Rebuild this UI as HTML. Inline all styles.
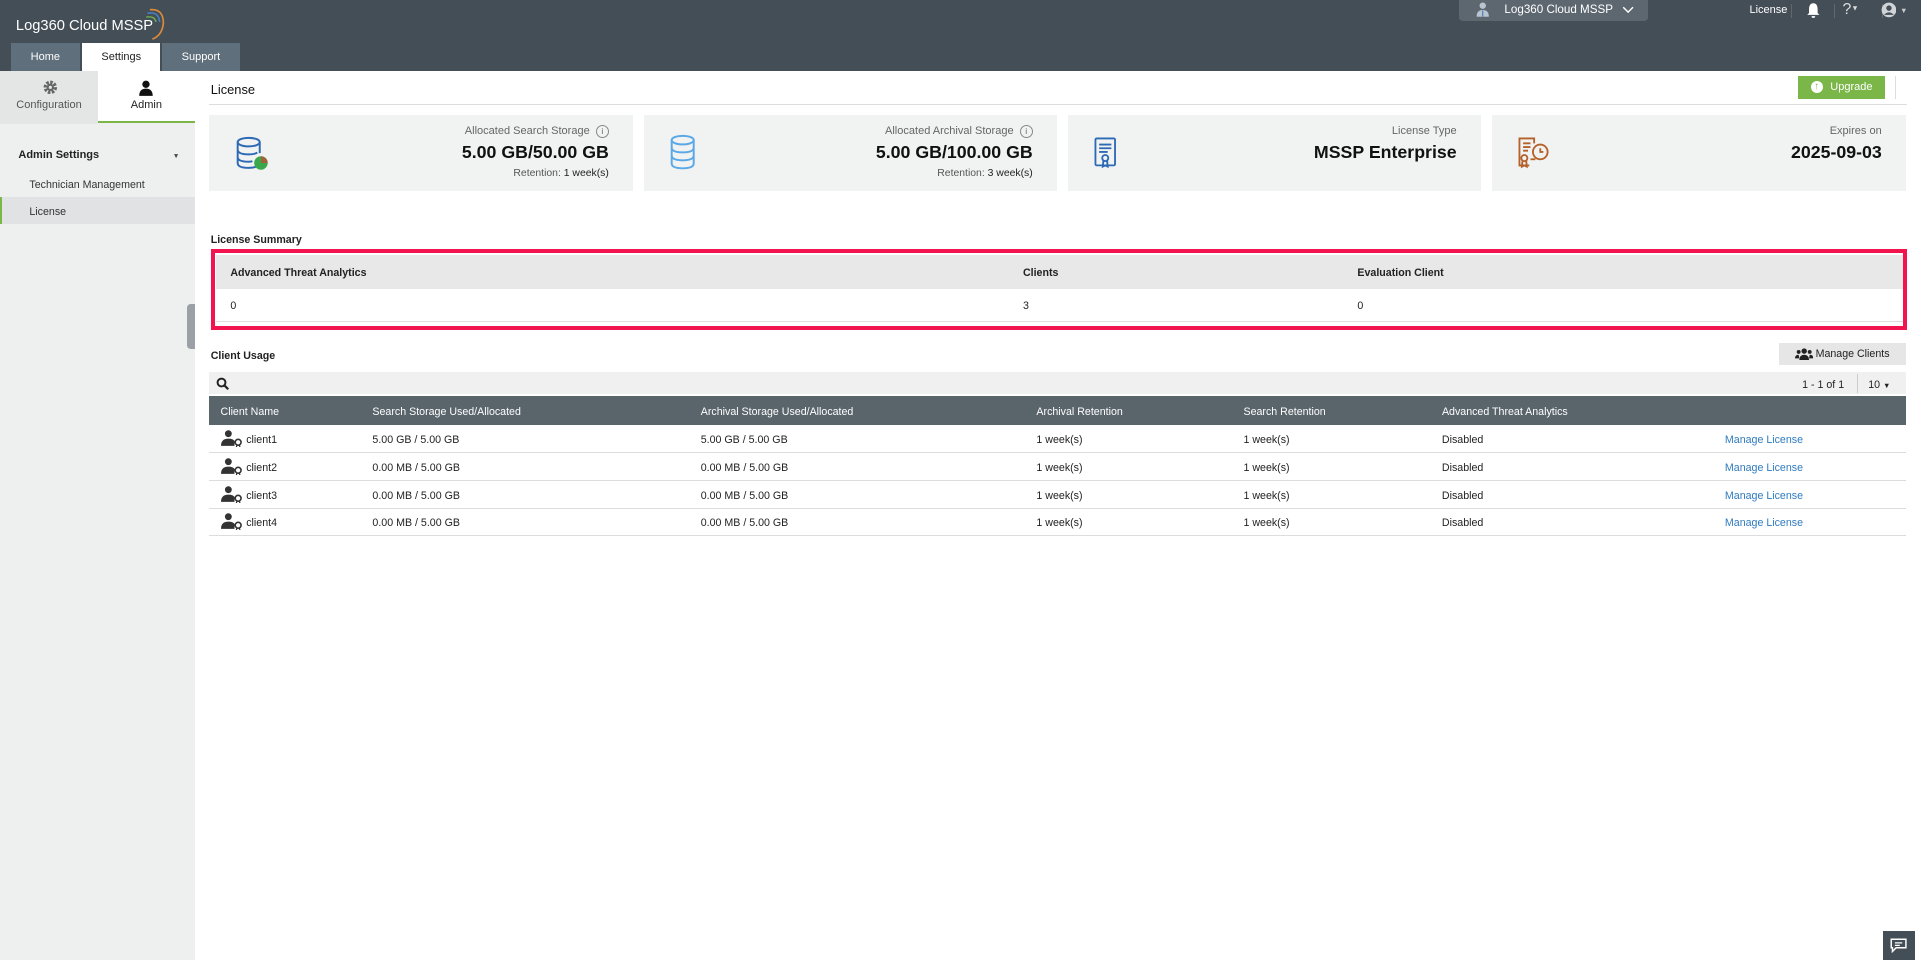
<!DOCTYPE html>
<html><head><meta charset="utf-8"><style>
html,body{margin:0;padding:0;width:1921px;height:960px;overflow:hidden;background:#fff}
#w{position:relative;width:1568px;height:784px;zoom:1.2251;font-family:"Liberation Sans",sans-serif;font-size:9px;color:#222}
.a{position:absolute}
.card{position:absolute;top:94px;height:62px;background:#f1f2f2}
.card .l{position:absolute;right:20px;top:8px;color:#666;font-size:9px}
.card .v{position:absolute;right:20px;top:22px;font-size:14.5px;font-weight:bold;color:#111}
.card .r{position:absolute;right:20px;top:43px;font-size:8.5px;color:#555}
.th{color:#fff;font-size:8.7px}
.row{position:absolute;left:171px;width:1385px;height:22px;border-bottom:1px solid #ddd}
.row span{position:absolute;top:7px;font-size:8.7px}
.row svg{position:absolute;left:9px;top:4px}
.ml{color:#2f7bbf}
</style></head><body><div id="w">
<!-- header -->
<div class="a" style="left:0;top:0;width:1568px;height:58px;background:#444e56"></div>
<div class="a" style="left:13px;top:15px;color:#fff;font-size:12px;">Log360 Cloud MSSP</div>
<svg class="a" style="left:118px;top:5px" width="20" height="30" viewBox="0 0 20 30"><path d="M4 3 Q15 2 15 14 Q14 24 6 27" fill="none" stroke="#d98a3a" stroke-width="1.4"/><path d="M2 6 Q11 4 12 13" fill="none" stroke="#4a7fc1" stroke-width="1.3"/><path d="M1 9 Q8 8 9 13" fill="none" stroke="#6cae4b" stroke-width="1.2"/></svg>
<div class="a" style="left:9px;top:35px;width:56px;height:23px;background:#5f6f7b;color:#fff;text-align:center;line-height:23px;font-size:9px">Home</div>
<div class="a" style="left:67px;top:35px;width:64px;height:23px;background:#fff;color:#222;text-align:center;line-height:23px;font-size:9px">Settings</div>
<div class="a" style="left:132px;top:35px;width:64px;height:23px;background:#5f6f7b;color:#fff;text-align:center;line-height:23px;font-size:9px">Support</div>
<div class="a" style="left:1191px;top:0;width:154px;height:17px;background:#5d6770;border-radius:0 0 3px 3px;color:#fff;font-size:9.5px;line-height:17px">
<svg style="position:absolute;left:14px;top:2px" width="11" height="12" viewBox="0 0 11 12"><circle cx="5.5" cy="3" r="2.6" fill="#b8c4d0"/><path d="M0.5 12 Q0.5 6.5 5.5 6.5 Q10.5 6.5 10.5 12Z" fill="#b8c4d0"/><path d="M5.5 7 V12" stroke="#4a7fc1"/></svg>
<span style="position:absolute;left:37px">Log360 Cloud MSSP</span>
<svg style="position:absolute;left:133px;top:5px" width="10" height="7" viewBox="0 0 10 7"><path d="M1 1 L5 5 L9 1" fill="none" stroke="#fff" stroke-width="1.2"/></svg></div>
<div class="a" style="left:1428px;top:3px;color:#fff;font-size:9px">License</div>
<div class="a" style="left:1462px;top:3px;width:1px;height:12px;background:#666"></div>
<svg class="a" style="left:1474px;top:2px" width="12" height="13" viewBox="0 0 12 13"><path d="M6 1 C3 1 2.5 4 2.5 6 L2.5 9 L1 10.5 L11 10.5 L9.5 9 L9.5 6 C9.5 4 9 1 6 1Z M4.5 11.5 h3 a1.5 1.5 0 0 1 -3 0Z" fill="#fff"/></svg>
<div class="a" style="left:1497px;top:3px;width:1px;height:12px;background:#666"></div>
<div class="a" style="left:1504px;top:1px;color:#ddd;font-size:13px">?<span style="font-size:6px;vertical-align:3px">&#9660;</span></div>
<div class="a" style="left:1536px;top:3px;width:1px;height:12px;background:#666"></div>
<svg class="a" style="left:1535px;top:2px" width="13" height="13" viewBox="0 0 13 13"><circle cx="6.5" cy="6.5" r="6" fill="#d0d4d8"/><circle cx="6.5" cy="5" r="2.2" fill="#444e56"/><path d="M2.5 10.5 Q6.5 6.5 10.5 10.5" fill="#444e56"/></svg>
<div class="a" style="left:1551px;top:5px;color:#ccc;font-size:6px">&#9660;</div>
<!-- sidebar -->
<div class="a" style="left:0;top:58px;width:159px;height:726px;background:#eef0f0"></div>
<div class="a" style="left:0;top:58px;width:80px;height:43px;background:#e4e6e6"></div>
<div class="a" style="left:80px;top:58px;width:79px;height:41px;background:#fff;border-bottom:2px solid #7ab648"></div>
<svg class="a" style="left:35px;top:65px" width="12" height="12" viewBox="0 0 12 12"><circle cx="6" cy="6" r="4" fill="none" stroke="#666" stroke-width="3" stroke-dasharray="2 1.1"/><circle cx="6" cy="6" r="3" fill="#666"/><circle cx="6" cy="6" r="1.3" fill="#e4e6e6"/></svg>
<div class="a" style="left:0;top:81px;width:80px;text-align:center;color:#555;font-size:9px">Configuration</div>
<svg class="a" style="left:113px;top:65px" width="13" height="13" viewBox="0 0 13 13"><circle cx="6.5" cy="3.5" r="3" fill="#111"/><path d="M1 13 Q1 7 6.5 7 Q12 7 12 13Z" fill="#111"/></svg>
<div class="a" style="left:80px;top:81px;width:79px;text-align:center;color:#222;font-size:9px">Admin</div>
<div class="a" style="left:15px;top:122px;font-weight:bold;font-size:9px;color:#222">Admin Settings</div>
<div class="a" style="left:141px;top:125px;font-size:5.5px;color:#444">&#9660;</div>
<div class="a" style="left:24px;top:146px;font-size:8.7px;color:#333">Technician Management</div>
<div class="a" style="left:0;top:161px;width:159px;height:22px;background:#e0e2e3;border-left:2px solid #7ab648;box-sizing:border-box"></div>
<div class="a" style="left:24px;top:168px;font-size:8.7px;color:#333">License</div>
<div class="a" style="left:153px;top:248px;width:6px;height:37px;background:#9aa0a5;border-radius:3px 0 0 3px"></div>
<!-- content -->
<div class="a" style="left:172px;top:67px;font-size:10.5px;color:#111">License</div>
<div class="a" style="left:171px;top:85px;width:1386px;height:1px;background:#ddd"></div>
<div class="a" style="left:1468px;top:62px;width:71px;height:19px;background:#7ab648;color:#fff;font-size:9px;line-height:19px"><span style="position:absolute;left:10px;top:4px;width:10px;height:10px;border-radius:50%;background:#fff;color:#7ab648;font-size:8px;line-height:10px;text-align:center;font-weight:bold">&#8593;</span><span style="position:absolute;left:26px">Upgrade</span></div>
<div class="a" style="left:1547px;top:62px;width:1px;height:19px;background:#ddd"></div>
<div class="card" style="left:171px;width:346px"><div class="l">Allocated Search Storage &nbsp;<span style="display:inline-block;width:9px;height:9px;border:1px solid #888;border-radius:50%;font-size:7px;line-height:9px;text-align:center">i</span></div><div class="v">5.00 GB/50.00 GB</div><div class="r">Retention: <span style="color:#222">1 week(s)</span></div>
<svg style="position:absolute;left:20px;top:17px" width="30" height="30" viewBox="0 0 30 30"><g fill="none" stroke="#2d6ab5" stroke-width="1.6"><ellipse cx="12" cy="5" rx="9" ry="3.5"/><path d="M3 5 V22 Q3 26 12 26 Q16 26 18 25 M21 5 V14 M3 11 Q3 15 12 15 Q17 15 19 13.5 M3 17 Q3 21 12 21 Q14 21 15 20.5"/></g><circle cx="22" cy="22" r="5.5" fill="#3aa84a"/><path d="M22 16.5 A5.5 5.5 0 0 1 27.5 22 L22 22Z" fill="#a0623a"/></svg></div>
<div class="card" style="left:526px;width:337px"><div class="l">Allocated Archival Storage &nbsp;<span style="display:inline-block;width:9px;height:9px;border:1px solid #888;border-radius:50%;font-size:7px;line-height:9px;text-align:center">i</span></div><div class="v">5.00 GB/100.00 GB</div><div class="r">Retention: <span style="color:#222">3 week(s)</span></div>
<svg style="position:absolute;left:19px;top:15px" width="26" height="30" viewBox="0 0 26 30"><g fill="none" stroke="#5aa9e6" stroke-width="1.6"><ellipse cx="12" cy="5" rx="9" ry="3.5"/><path d="M3 5 V24 Q3 28 12 28 Q21 28 21 24 V5 M3 11 Q3 15 12 15 Q21 15 21 11 M3 17.5 Q3 21.5 12 21.5 Q21 21.5 21 17.5"/></g></svg></div>
<div class="card" style="left:872px;width:337px"><div class="l">License Type</div><div class="v">MSSP Enterprise</div>
<svg style="position:absolute;left:20px;top:17px" width="22" height="28" viewBox="0 0 22 28"><g fill="none" stroke="#2d6ab5" stroke-width="1.5"><rect x="2" y="2" width="16" height="22" rx="1"/><path d="M5 7h10M5 10h10M5 13h7"/><circle cx="10" cy="18" r="2.5"/><path d="M8.5 20 L8 25 L10 24 L12 25 L11.5 20"/></g></svg></div>
<div class="card" style="left:1218px;width:338px"><div class="l">Expires on</div><div class="v">2025-09-03</div>
<svg style="position:absolute;left:20px;top:17px" width="28" height="28" viewBox="0 0 28 28"><g fill="none" stroke="#b5612a" stroke-width="1.5"><path d="M14 6 V2 H2 V24 H10"/><path d="M5 6h6M5 9h6M5 12h4"/><circle cx="6" cy="18" r="2.5"/><path d="M4.5 20 L4 25 L6 24 L8 25 L7.5 20"/><circle cx="19" cy="13" r="6"/><path d="M19 10 V13 H21.5"/><path d="M11 19h4"/></g></svg></div>
<!-- license summary -->
<div class="a" style="left:172px;top:191px;font-weight:bold;font-size:8.7px">License Summary</div>
<div class="a" style="left:172px;top:203px;width:1385px;height:66px;border:4px solid #f2144f;box-sizing:border-box"></div>
<div class="a" style="left:176px;top:208px;width:1377px;height:28px;background:#e8e8e8"></div>
<div class="a" style="left:176px;top:262px;width:1377px;height:1px;background:#ddd"></div>
<div class="a" style="left:188px;top:218px;font-weight:bold;font-size:8.7px">Advanced Threat Analytics</div>
<div class="a" style="left:835px;top:218px;font-weight:bold;font-size:8.7px">Clients</div>
<div class="a" style="left:1108px;top:218px;font-weight:bold;font-size:8.7px">Evaluation Client</div>
<div class="a" style="left:188px;top:245px;font-size:8.7px">0</div>
<div class="a" style="left:835px;top:245px;font-size:8.7px">3</div>
<div class="a" style="left:1108px;top:245px;font-size:8.7px">0</div>
<!-- client usage -->
<div class="a" style="left:172px;top:286px;font-weight:bold;font-size:8.7px">Client Usage</div>
<div class="a" style="left:1452px;top:280px;width:104px;height:18px;background:#e6e6e6;font-size:8.7px;line-height:18px">
<svg style="position:absolute;left:13px;top:4px" width="15" height="10" viewBox="0 0 15 10"><circle cx="7.5" cy="2.5" r="2.2" fill="#222"/><path d="M3.5 10 Q3.5 5.5 7.5 5.5 Q11.5 5.5 11.5 10Z" fill="#222"/><circle cx="3" cy="3.2" r="1.6" fill="#222"/><circle cx="12" cy="3.2" r="1.6" fill="#222"/><path d="M0 8.5 Q0 5.5 3 5.5 L3.5 8.5Z M15 8.5 Q15 5.5 12 5.5 L11.5 8.5Z" fill="#222"/></svg>
<span style="position:absolute;left:30px">Manage Clients</span></div>
<div class="a" style="left:171px;top:304px;width:1385px;height:18px;background:#f0f0f0"></div>
<svg class="a" style="left:176px;top:308px" width="11" height="11" viewBox="0 0 11 11"><circle cx="4.5" cy="4.5" r="3.2" fill="none" stroke="#222" stroke-width="1.6"/><path d="M7 7 L10 10" stroke="#222" stroke-width="1.8"/></svg>
<div class="a" style="left:1471px;top:309px;font-size:8.7px">1 - 1 of 1</div>
<div class="a" style="left:1516px;top:305px;width:1px;height:16px;background:#ccc"></div>
<div class="a" style="left:1525px;top:309px;font-size:8.7px">10 <span style="font-size:6px">&#9660;</span></div>
<div class="a" style="left:171px;top:323px;width:1385px;height:24px;background:#59646b"></div>
<div class="a th" style="left:180px;top:331px">Client Name</div>
<div class="a th" style="left:304px;top:331px">Search Storage Used/Allocated</div>
<div class="a th" style="left:572px;top:331px">Archival Storage Used/Allocated</div>
<div class="a th" style="left:846px;top:331px">Archival Retention</div>
<div class="a th" style="left:1015px;top:331px">Search Retention</div>
<div class="a th" style="left:1177px;top:331px">Advanced Threat Analytics</div>
<div class="row" style="top:347px"><svg width="18" height="14" viewBox="0 0 18 14"><circle cx="6" cy="3" r="2.8" fill="#333"/><path d="M0 13 Q0 7 6 7 Q10 7 11 9 L11 13Z" fill="#333"/><circle cx="14" cy="10" r="2.4" fill="none" stroke="#333" stroke-width="1.3"/><path d="M13 12.5 L12.5 14 M15 12.5 L15.5 14" stroke="#333"/></svg><span style="left:30px">client1</span><span style="left:133px">5.00 GB / 5.00 GB</span><span style="left:401px">5.00 GB / 5.00 GB</span><span style="left:675px">1 week(s)</span><span style="left:844px">1 week(s)</span><span style="left:1006px">Disabled</span><span class="ml" style="left:1237px">Manage License</span></div>
<div class="row" style="top:370px"><svg width="18" height="14" viewBox="0 0 18 14"><circle cx="6" cy="3" r="2.8" fill="#333"/><path d="M0 13 Q0 7 6 7 Q10 7 11 9 L11 13Z" fill="#333"/><circle cx="14" cy="10" r="2.4" fill="none" stroke="#333" stroke-width="1.3"/><path d="M13 12.5 L12.5 14 M15 12.5 L15.5 14" stroke="#333"/></svg><span style="left:30px">client2</span><span style="left:133px">0.00 MB / 5.00 GB</span><span style="left:401px">0.00 MB / 5.00 GB</span><span style="left:675px">1 week(s)</span><span style="left:844px">1 week(s)</span><span style="left:1006px">Disabled</span><span class="ml" style="left:1237px">Manage License</span></div>
<div class="row" style="top:393px"><svg width="18" height="14" viewBox="0 0 18 14"><circle cx="6" cy="3" r="2.8" fill="#333"/><path d="M0 13 Q0 7 6 7 Q10 7 11 9 L11 13Z" fill="#333"/><circle cx="14" cy="10" r="2.4" fill="none" stroke="#333" stroke-width="1.3"/><path d="M13 12.5 L12.5 14 M15 12.5 L15.5 14" stroke="#333"/></svg><span style="left:30px">client3</span><span style="left:133px">0.00 MB / 5.00 GB</span><span style="left:401px">0.00 MB / 5.00 GB</span><span style="left:675px">1 week(s)</span><span style="left:844px">1 week(s)</span><span style="left:1006px">Disabled</span><span class="ml" style="left:1237px">Manage License</span></div>
<div class="row" style="top:415px"><svg width="18" height="14" viewBox="0 0 18 14"><circle cx="6" cy="3" r="2.8" fill="#333"/><path d="M0 13 Q0 7 6 7 Q10 7 11 9 L11 13Z" fill="#333"/><circle cx="14" cy="10" r="2.4" fill="none" stroke="#333" stroke-width="1.3"/><path d="M13 12.5 L12.5 14 M15 12.5 L15.5 14" stroke="#333"/></svg><span style="left:30px">client4</span><span style="left:133px">0.00 MB / 5.00 GB</span><span style="left:401px">0.00 MB / 5.00 GB</span><span style="left:675px">1 week(s)</span><span style="left:844px">1 week(s)</span><span style="left:1006px">Disabled</span><span class="ml" style="left:1237px">Manage License</span></div>
<div class="a" style="left:1537px;top:760px;width:26px;height:24px;background:#444e56"></div>
<svg class="a" style="left:1543px;top:766px" width="14" height="12" viewBox="0 0 14 12"><path d="M1 1 H13 V8 H5 L2 11 V8 H1Z" fill="none" stroke="#fff" stroke-width="1.2"/><path d="M4 4h6M4 6h4" stroke="#fff"/></svg>
</div></body></html>
